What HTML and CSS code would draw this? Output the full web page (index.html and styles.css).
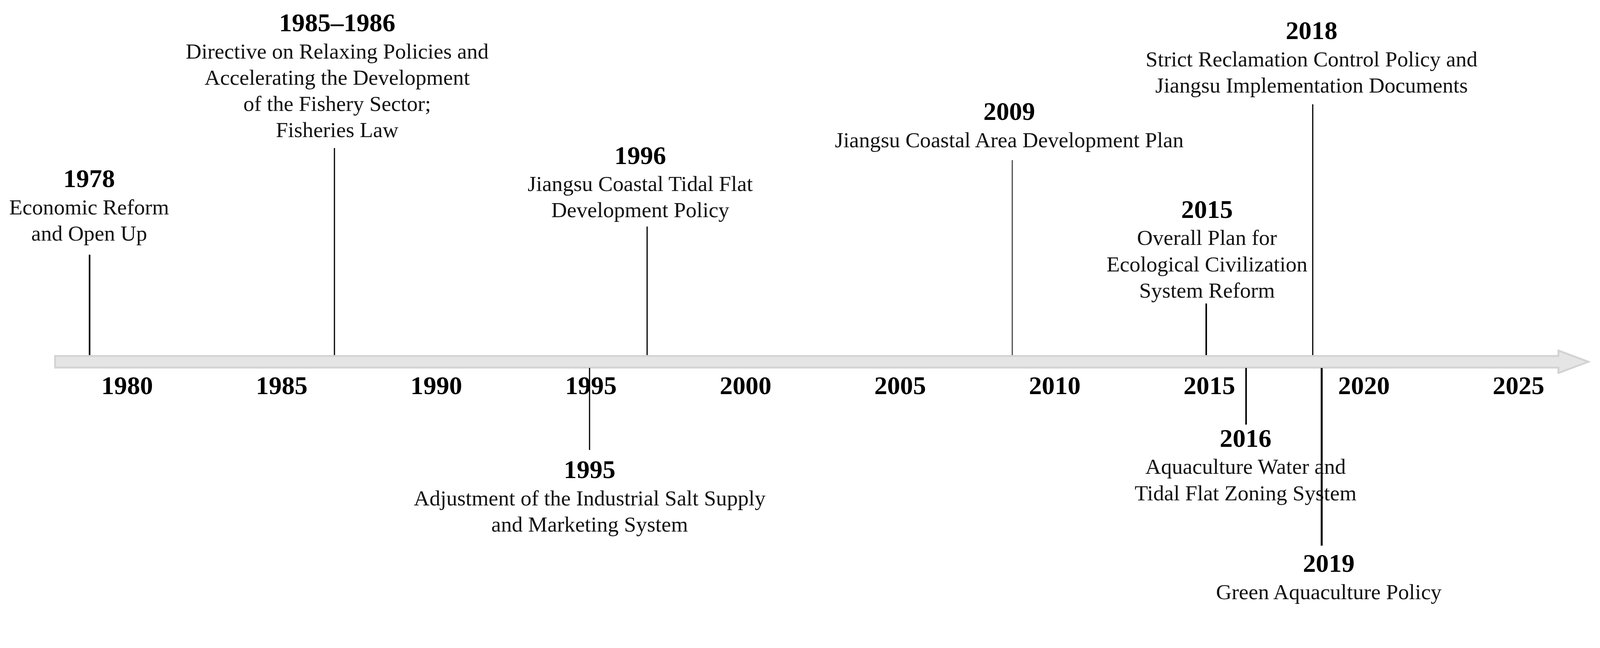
FILE: index.html
```html
<!DOCTYPE html>
<html lang="en">
<head>
<meta charset="utf-8">
<title>Policy timeline</title>
<link rel="stylesheet" href="styles.css">
</head>
<body>
<div class="chart">
  <svg class="axis" viewBox="0 0 4271 65" preserveAspectRatio="none" aria-hidden="true">
    <polygon class="arrow" points="147,17 4160,17 4160,2.5 4240,32.5 4160,62.5 4160,48 147,48"/>
  </svg>
  <div class="ticks">
    <div class="tick">1980</div>
    <div class="tick">1985</div>
    <div class="tick">1990</div>
    <div class="tick">1995</div>
    <div class="tick">2000</div>
    <div class="tick">2005</div>
    <div class="tick">2010</div>
    <div class="tick">2015</div>
    <div class="tick">2020</div>
    <div class="tick">2025</div>
  </div>

  <div class="event up ev-1978">
    <div class="year">1978</div>
    <div class="desc">Economic Reform<br>and Open Up</div>
    <div class="stem thick"></div>
  </div>
  <div class="event up ev-1986">
    <div class="year">1985–1986</div>
    <div class="desc">Directive on Relaxing Policies and<br>Accelerating the Development<br>of the Fishery Sector;<br>Fisheries Law</div>
    <div class="stem"></div>
  </div>
  <div class="event up ev-1996">
    <div class="year">1996</div>
    <div class="desc">Jiangsu Coastal Tidal Flat<br>Development Policy</div>
    <div class="stem"></div>
  </div>
  <div class="event up ev-2009">
    <div class="year">2009</div>
    <div class="desc">Jiangsu Coastal Area Development Plan</div>
    <div class="stem"></div>
  </div>
  <div class="event up ev-2015">
    <div class="year">2015</div>
    <div class="desc">Overall Plan for<br>Ecological Civilization<br>System Reform</div>
    <div class="stem thick"></div>
  </div>
  <div class="event up ev-2018">
    <div class="year">2018</div>
    <div class="desc">Strict Reclamation Control Policy and<br>Jiangsu Implementation Documents</div>
    <div class="stem"></div>
  </div>

  <div class="event down ev-1995">
    <div class="stem"></div>
    <div class="year">1995</div>
    <div class="desc">Adjustment of the Industrial Salt Supply<br>and Marketing System</div>
  </div>
  <div class="event down ev-2016">
    <div class="stem thick"></div>
    <div class="year">2016</div>
    <div class="desc">Aquaculture Water and<br>Tidal Flat Zoning System</div>
  </div>
  <div class="event down ev-2019">
    <div class="stem thick"></div>
    <div class="year">2019</div>
    <div class="desc">Green Aquaculture Policy</div>
  </div>
</div>
</body>
</html>
```
FILE: styles.css
```css
/* 1rem = 100 design pixels of the 4271px-wide figure */
* { box-sizing: border-box; }
html {
  font-size: calc(100vw / 42.71);
  overflow: hidden;
}
html, body { margin: 0; padding: 0; background: #fff; }
body {
  font-family: "Liberation Serif", "Times New Roman", serif;
  color: #000;
  overflow: hidden;
}
.chart {
  position: relative;
  width: 42.71rem;
  height: 16.59rem;
  overflow: hidden;
  padding-top: 9.33rem;
  display: flex;
  flex-direction: column;
}
.axis { display: block; flex: none; width: 42.71rem; height: 0.65rem; }
.arrow {
  fill: #e5e5e5;
  stroke: #d3d3d3;
  stroke-width: 5;
  stroke-linejoin: miter;
}
.ticks { display: flex; padding-left: 1.33rem; }
.tick {
  flex: none;
  width: 4.127rem;
  text-align: center;
  font-weight: 700;
  font-size: 0.69rem;
  line-height: 0.62rem;
}

.event {
  position: absolute;
  display: flex;
  flex-direction: column;
  align-items: center;
  transform: translateX(-50%);
  white-space: nowrap;
}
.year { font-weight: 700; font-size: 0.69rem; line-height: 0.82rem; }
.desc { font-size: 0.58rem; line-height: 0.70rem; text-align: center; color: #111; }
.stem {
  flex: none;
  width: 0.03rem;
  height: var(--len);
  background: #000;
  transform: translateX(var(--dx, 0rem));
}
.stem.thick { width: 0.045rem; }
.up .stem { margin-top: var(--gap, 0rem); }
.down { top: 9.82rem; }
.down .year { margin-top: var(--gap, 0rem); }

.ev-1978 { left: 2.38rem;  top: 4.36rem; --dx: 0.01rem;  --gap: 0.22rem; --len: 2.68rem; }
.ev-1986 { left: 9.00rem;  top: 0.20rem; --dx: -0.07rem; --gap: 0.13rem; --len: 5.53rem; }
.ev-1996 { left: 17.09rem; top: 3.74rem; --dx: 0.18rem;  --gap: 0.09rem; --len: 3.43rem; }
.ev-2009 { left: 26.94rem; top: 2.57rem; --dx: 0.08rem;  --gap: 0.19rem; --len: 5.20rem; }
.ev-2015 { left: 32.22rem; top: 5.18rem; --dx: -0.02rem; --gap: 0rem;    --len: 1.38rem; }
.ev-2018 { left: 35.01rem; top: 0.41rem; --dx: 0.03rem;  --gap: 0.15rem; --len: 6.70rem; }

.ev-1995 { left: 15.74rem; --dx: 0rem;     --len: 2.19rem; --gap: 0.12rem; }
.ev-2016 { left: 33.25rem; --dx: 0.01rem;  --len: 1.51rem; --gap: -0.04rem; }
.ev-2019 { left: 35.47rem; --dx: -0.19rem; --len: 4.75rem; --gap: 0.06rem; }
```
